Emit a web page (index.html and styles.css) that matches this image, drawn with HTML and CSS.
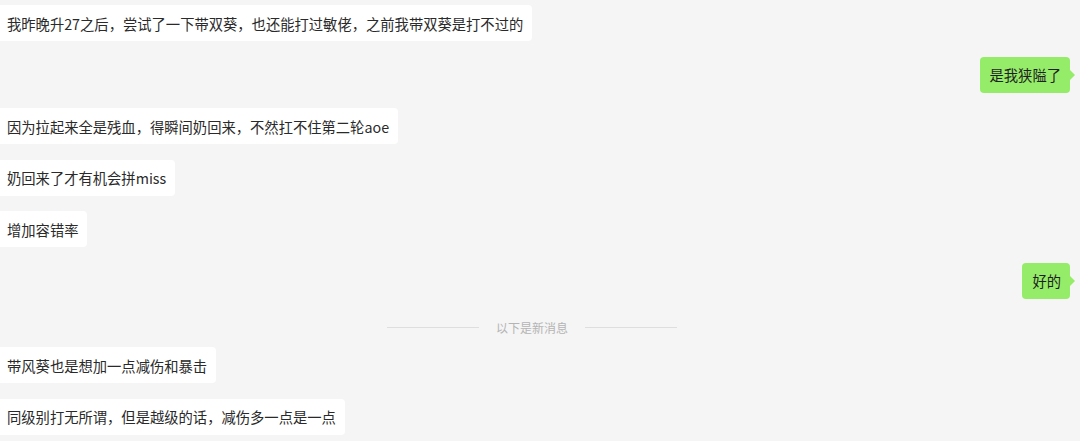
FILE: index.html
```html
<!DOCTYPE html>
<html lang="zh-CN">
<head>
<meta charset="utf-8">
<link rel="stylesheet" href="styles.css">
</head>
<body>
<div class="chat">
  <div class="row left"><div class="bubble">我昨晚升27之后，尝试了一下带双葵，也还能打过敏佬，之前我带双葵是打不过的</div></div>
  <div class="row right"><div class="bubble me">是我狭隘了</div></div>
  <div class="row left"><div class="bubble">因为拉起来全是残血，得瞬间奶回来，不然扛不住第二轮aoe</div></div>
  <div class="row left"><div class="bubble">奶回来了才有机会拼miss</div></div>
  <div class="row left"><div class="bubble">增加容错率</div></div>
  <div class="row right"><div class="bubble me">好的</div></div>
  <div class="divider"><span class="line"></span><span class="label">以下是新消息</span><span class="line"></span></div>
  <div class="row left"><div class="bubble">带风葵也是想加一点减伤和暴击</div></div>
  <div class="row left"><div class="bubble">同级别打无所谓，但是越级的话，减伤多一点是一点</div></div>
</div>
</body>
</html>
```

FILE: styles.css
```css
html, body {
  margin: 0;
  padding: 0;
  background: #f5f5f5;
}
body {
  width: 1080px;
  height: 441px;
  overflow: hidden;
  font-family: "Noto Sans CJK SC", "Noto Sans", sans-serif;
}
.chat {
  display: flex;
  flex-direction: column;
  padding-top: 5px;
}
.row {
  display: flex;
  height: 36px;
  margin-bottom: 15.6px;
}
.row.left {
  justify-content: flex-start;
  margin-left: -3px;
}
.row.right {
  justify-content: flex-end;
  padding-right: 10px;
}
.bubble {
  position: relative;
  height: 36px;
  box-sizing: border-box;
  padding: 0 9px 0 10px;
  display: flex;
  align-items: center;
  background: #ffffff;
  color: #2a2a2a;
  font-size: 14.3px;
  border-radius: 4px;
  white-space: nowrap;
}
.bubble.me {
  background: #95ec69;
  color: #1f1f1f;
}
.bubble.me::after {
  content: "";
  position: absolute;
  right: -5px;
  top: 13px;
  border-top: 5px solid transparent;
  border-bottom: 5px solid transparent;
  border-left: 5px solid #95ec69;
}
.divider {
  display: flex;
  align-items: center;
  height: 17px;
  margin: 4px 0 11.5px 387px;
  width: 290px;
  gap: 17px;
}
.divider .line {
  flex: 1;
  height: 1px;
  background: #dedede;
}
.divider .label {
  font-size: 12px;
  color: #b4b4b4;
}
```
